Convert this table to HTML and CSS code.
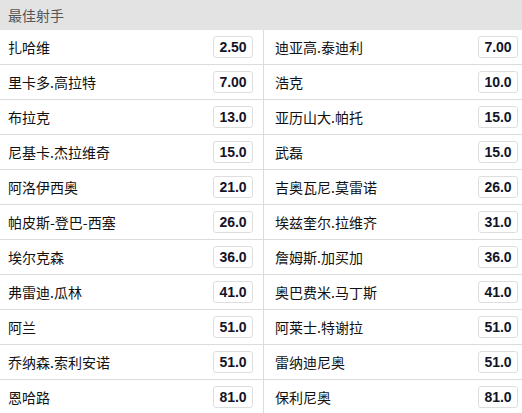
FILE: index.html
```html
<!DOCTYPE html>
<html lang="zh">
<head>
<meta charset="utf-8">
<link rel="stylesheet" href="styles.css">
</head>
<body>
<div class="panel">
  <div class="header">最佳射手</div>
  <div class="grid">
    <div class="cell left"><span class="name">扎哈维</span><span class="odds">2.50</span></div>
    <div class="cell right"><span class="name">迪亚高.泰迪利</span><span class="odds">7.00</span></div>
    <div class="cell left"><span class="name">里卡多.高拉特</span><span class="odds">7.00</span></div>
    <div class="cell right"><span class="name">浩克</span><span class="odds">10.0</span></div>
    <div class="cell left"><span class="name">布拉克</span><span class="odds">13.0</span></div>
    <div class="cell right"><span class="name">亚历山大.帕托</span><span class="odds">15.0</span></div>
    <div class="cell left"><span class="name">尼基卡.杰拉维奇</span><span class="odds">15.0</span></div>
    <div class="cell right"><span class="name">武磊</span><span class="odds">15.0</span></div>
    <div class="cell left"><span class="name">阿洛伊西奥</span><span class="odds">21.0</span></div>
    <div class="cell right"><span class="name">吉奥瓦尼.莫雷诺</span><span class="odds">26.0</span></div>
    <div class="cell left"><span class="name">帕皮斯-登巴-西塞</span><span class="odds">26.0</span></div>
    <div class="cell right"><span class="name">埃兹奎尔.拉维齐</span><span class="odds">31.0</span></div>
    <div class="cell left"><span class="name">埃尔克森</span><span class="odds">36.0</span></div>
    <div class="cell right"><span class="name">詹姆斯.加买加</span><span class="odds">36.0</span></div>
    <div class="cell left"><span class="name">弗雷迪.瓜林</span><span class="odds">41.0</span></div>
    <div class="cell right"><span class="name">奥巴费米.马丁斯</span><span class="odds">41.0</span></div>
    <div class="cell left"><span class="name">阿兰</span><span class="odds">51.0</span></div>
    <div class="cell right"><span class="name">阿莱士.特谢拉</span><span class="odds">51.0</span></div>
    <div class="cell left"><span class="name">乔纳森.索利安诺</span><span class="odds">51.0</span></div>
    <div class="cell right"><span class="name">雷纳迪尼奥</span><span class="odds">51.0</span></div>
    <div class="cell left"><span class="name">恩哈路</span><span class="odds">81.0</span></div>
    <div class="cell right"><span class="name">保利尼奥</span><span class="odds">81.0</span></div>
  </div>
</div>
</body>
</html>
```
FILE: styles.css
```css
html, body {
  margin: 0;
  padding: 0;
  background: #fff;
  overflow: hidden;
}
.panel {
  width: 527px;
  font-family: "Noto Sans CJK SC", "Noto Sans", sans-serif;
}
.header {
  height: 30px;
  line-height: 30px;
  padding-left: 8px;
  background: #e3e3e3;
  color: #555;
  font-size: 14px;
}
.grid {
  display: grid;
  grid-template-columns: 263px 264px;
}
.cell {
  height: 34px;
  border-bottom: 1px solid #dcdcdc;
  display: flex;
  align-items: center;
  justify-content: space-between;
  box-sizing: content-box;
}
.left {
  padding: 0 10px 0 8px;
  width: 245px;
}
.right {
  border-left: 1px solid #dcdcdc;
  padding: 0 9px 0 11px;
  width: 243px;
}
.name {
  font-size: 14px;
  color: #111;
  line-height: 20px;
}
.odds {
  box-sizing: border-box;
  width: 40px;
  height: 22px;
  border: 1px solid #dedede;
  border-radius: 3px;
  font-family: "Liberation Sans", Arial, sans-serif;
  font-size: 14px;
  font-weight: bold;
  color: #141428;
  line-height: 20px;
  text-align: center;
}
```
